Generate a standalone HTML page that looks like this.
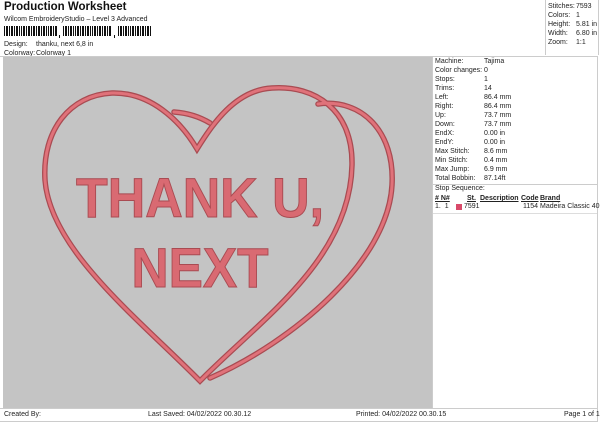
<!DOCTYPE html>
<html><head><style>
body{margin:0;width:600px;height:424px;background:#fff;font-family:"Liberation Sans",sans-serif;position:relative;overflow:hidden;color:#222}
.a{position:absolute;white-space:nowrap;font-size:7px}
.r{position:absolute;left:435px;font-size:7px;white-space:nowrap}
.r span{position:absolute;left:49px}
</style></head><body>
<div class="a" style="left:4px;top:1px;font-size:11.5px;font-weight:bold;color:#111">Production Worksheet</div>
<div class="a" style="left:4px;top:16px">Wilcom EmbroideryStudio – Level 3 Advanced</div>
<svg style="position:absolute;left:4px;top:26px" width="150" height="12">
<g fill="#111">
<rect x="0" y="0" width="1" height="10"/><rect x="2" y="0" width="2" height="10"/><rect x="5" y="0" width="1" height="10"/><rect x="7" y="0" width="2" height="10"/><rect x="10" y="0" width="1" height="10"/><rect x="12" y="0" width="2" height="10"/><rect x="15" y="0" width="1" height="10"/><rect x="17" y="0" width="1" height="10"/><rect x="19" y="0" width="2" height="10"/><rect x="22" y="0" width="1" height="10"/><rect x="24" y="0" width="2" height="10"/><rect x="27" y="0" width="1" height="10"/><rect x="29" y="0" width="2" height="10"/><rect x="32" y="0" width="1" height="10"/><rect x="34" y="0" width="2" height="10"/><rect x="37" y="0" width="1" height="10"/><rect x="39" y="0" width="2" height="10"/><rect x="42" y="0" width="1" height="10"/><rect x="44" y="0" width="1" height="10"/><rect x="46" y="0" width="2" height="10"/><rect x="49" y="0" width="1" height="10"/><rect x="51" y="0" width="2" height="10"/>
<rect x="55" y="9" width="1" height="3"/>
<rect x="59" y="0" width="1" height="10"/><rect x="61" y="0" width="2" height="10"/><rect x="64" y="0" width="1" height="10"/><rect x="66" y="0" width="2" height="10"/><rect x="69" y="0" width="1" height="10"/><rect x="71" y="0" width="1" height="10"/><rect x="73" y="0" width="2" height="10"/><rect x="76" y="0" width="1" height="10"/><rect x="78" y="0" width="2" height="10"/><rect x="81" y="0" width="1" height="10"/><rect x="83" y="0" width="2" height="10"/><rect x="86" y="0" width="1" height="10"/><rect x="88" y="0" width="1" height="10"/><rect x="90" y="0" width="2" height="10"/><rect x="93" y="0" width="1" height="10"/><rect x="95" y="0" width="2" height="10"/><rect x="98" y="0" width="1" height="10"/><rect x="100" y="0" width="2" height="10"/><rect x="103" y="0" width="1" height="10"/><rect x="105" y="0" width="2" height="10"/>
<rect x="110" y="9" width="1" height="3"/>
<rect x="114" y="0" width="1" height="10"/><rect x="116" y="0" width="2" height="10"/><rect x="119" y="0" width="1" height="10"/><rect x="121" y="0" width="2" height="10"/><rect x="124" y="0" width="1" height="10"/><rect x="126" y="0" width="1" height="10"/><rect x="128" y="0" width="2" height="10"/><rect x="131" y="0" width="1" height="10"/><rect x="133" y="0" width="2" height="10"/><rect x="136" y="0" width="1" height="10"/><rect x="138" y="0" width="2" height="10"/><rect x="141" y="0" width="1" height="10"/><rect x="143" y="0" width="2" height="10"/><rect x="146" y="0" width="1" height="10"/>
</g></svg>
<div class="a" style="left:4px;top:41px">Design:</div><div class="a" style="left:36px;top:41px">thanku, next 6,8 in</div>
<div class="a" style="left:4px;top:50px">Colorway:</div><div class="a" style="left:36px;top:50px">Colorway 1</div>
<div style="position:absolute;left:545px;top:0;width:52px;height:55px;border-left:1px solid #ccc;border-right:1px solid #ccc"></div>
<div style="position:absolute;left:0;top:56px;width:598px;height:1px;background:#ccc"></div>
<div class="a" style="left:548px;top:3px">Stitches:</div><div class="a" style="left:576px;top:3px">7593</div>
<div class="a" style="left:548px;top:12px">Colors:</div><div class="a" style="left:576px;top:12px">1</div>
<div class="a" style="left:548px;top:21px">Height:</div><div class="a" style="left:576px;top:21px">5.81 in</div>
<div class="a" style="left:548px;top:30px">Width:</div><div class="a" style="left:576px;top:30px">6.80 in</div>
<div class="a" style="left:548px;top:39px">Zoom:</div><div class="a" style="left:576px;top:39px">1:1</div>
<div style="position:absolute;left:3px;top:57px;width:429px;height:351px;background:#c4c4c4"></div>
<div style="position:absolute;left:432px;top:57px;width:1px;height:351px;background:#ccc"></div>
<div style="position:absolute;left:597px;top:57px;width:1px;height:365px;background:#ccc"></div>
<div class="r" style="top:58px">Machine:<span>Tajima</span></div>
<div class="r" style="top:67px">Color changes:<span>0</span></div>
<div class="r" style="top:76px">Stops:<span>1</span></div>
<div class="r" style="top:85px">Trims:<span>14</span></div>
<div class="r" style="top:94px">Left:<span>86.4 mm</span></div>
<div class="r" style="top:103px">Right:<span>86.4 mm</span></div>
<div class="r" style="top:112px">Up:<span>73.7 mm</span></div>
<div class="r" style="top:121px">Down:<span>73.7 mm</span></div>
<div class="r" style="top:130px">EndX:<span>0.00 in</span></div>
<div class="r" style="top:139px">EndY:<span>0.00 in</span></div>
<div class="r" style="top:148px">Max Stitch:<span>8.6 mm</span></div>
<div class="r" style="top:157px">Min Stitch:<span>0.4 mm</span></div>
<div class="r" style="top:166px">Max Jump:<span>6.9 mm</span></div>
<div class="r" style="top:175px">Total Bobbin:<span>87.14ft</span></div>
<div style="position:absolute;left:433px;top:184px;width:164px;height:1px;background:#ccc"></div>
<div class="r" style="top:185px">Stop Sequence:</div>
<div class="a" style="left:435px;top:195px;font-weight:bold;text-decoration:underline"># N#</div>
<div class="a" style="left:467px;top:195px;font-weight:bold;text-decoration:underline">St.</div>
<div class="a" style="left:480px;top:195px;font-weight:bold;text-decoration:underline">Description</div>
<div class="a" style="left:521px;top:195px;font-weight:bold;text-decoration:underline">Code</div>
<div class="a" style="left:540px;top:195px;font-weight:bold;text-decoration:underline">Brand</div>
<div class="a" style="left:435px;top:203px">1.&nbsp; 1</div>
<div style="position:absolute;left:456px;top:204px;width:6px;height:6px;background:#d94a6a"></div>
<div class="a" style="left:464px;top:203px">7591</div>
<div class="a" style="left:523px;top:203px">1154</div>
<div class="a" style="left:540px;top:203px">Madeira Classic 40</div>
<div style="position:absolute;left:433px;top:213px;width:164px;height:1px;background:#ddd"></div>
<div style="position:absolute;left:0;top:408px;width:598px;height:1px;background:#ccc"></div>
<div style="position:absolute;left:0;top:421px;width:598px;height:1px;background:#ccc"></div>
<div class="a" style="left:4px;top:411px">Created By:</div>
<div class="a" style="left:148px;top:411px">Last Saved: 04/02/2022 00.30.12</div>
<div class="a" style="left:356px;top:411px">Printed: 04/02/2022 00.30.15</div>
<div class="a" style="left:564px;top:411px">Page 1 of 1</div>
<svg style="position:absolute;left:0;top:0" width="600" height="424">
<g fill="none" stroke="#a94b52" stroke-width="5.5" stroke-linecap="round">
<path d="M174,112 C188,113 200,117 210,123"/>
<path d="M318,104 C362,98 395,132 392,185 C388,262 292,342 210,378"/>
<path d="M197,149 C180,120 150,92 112,93 C70,95 42,130 45,180 C50,250 140,320 200,381 C260,320 350,260 352,165 C353,110 315,85 272,88 C235,90 212,125 197,149 Z"/>
</g>
<g fill="none" stroke="#e0727a" stroke-width="3" stroke-linecap="round">
<path d="M174,112 C188,113 200,117 210,123"/>
<path d="M318,104 C362,98 395,132 392,185 C388,262 292,342 210,378"/>
<path d="M197,149 C180,120 150,92 112,93 C70,95 42,130 45,180 C50,250 140,320 200,381 C260,320 350,260 352,165 C353,110 315,85 272,88 C235,90 212,125 197,149 Z"/>
</g>
<g font-family="Liberation Sans, sans-serif" font-size="56" font-weight="bold" fill="#d96a72" stroke="#a94b52" stroke-width="1" text-anchor="middle">
<text x="200" y="217" textLength="248" lengthAdjust="spacingAndGlyphs">THANK U,</text>
<text x="200" y="287" textLength="137" lengthAdjust="spacingAndGlyphs">NEXT</text>
</g>
</svg>
</body></html>
